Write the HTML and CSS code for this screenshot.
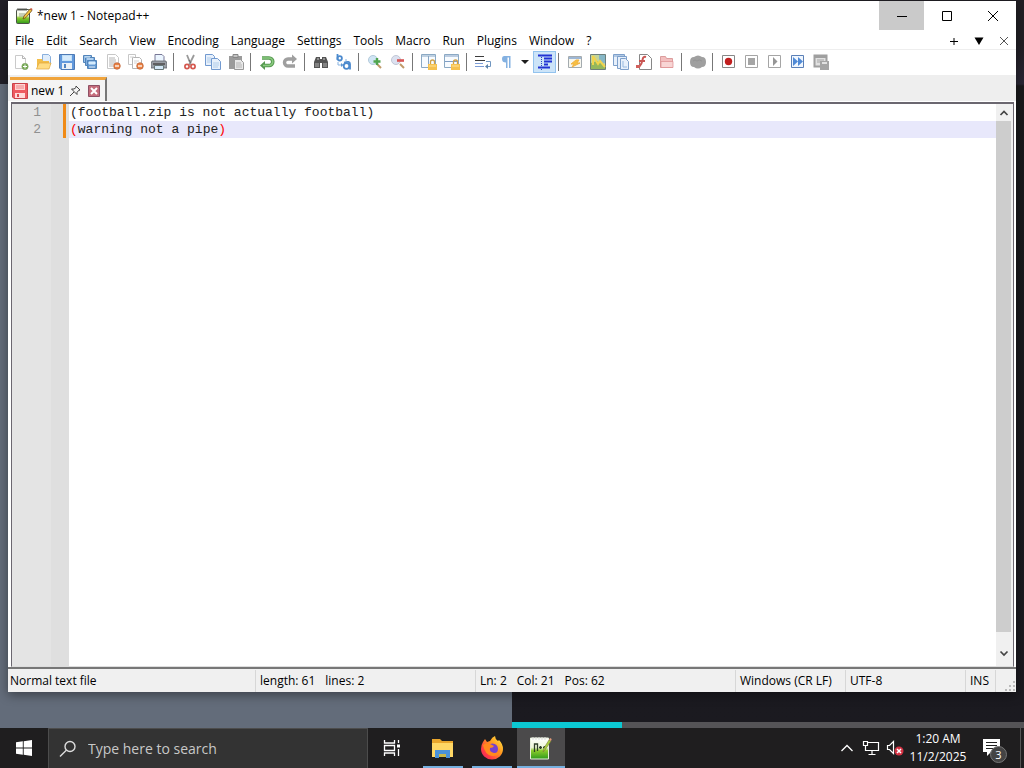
FILE: index.html
```html
<!DOCTYPE html>
<html lang="en">
<head>
<meta charset="utf-8">
<meta name="viewport" content="width=device-width, initial-scale=1">
<title>*new 1 - Notepad++</title>
<link rel="stylesheet" href="styles.css">
</head>
<body>
<svg class="sprite" aria-hidden="true">
  <defs>
    <linearGradient id="lime" x1="0" y1="0" x2="0" y2="1"><stop offset="0" stop-color="#fff"/><stop offset=".45" stop-color="#eef8d8"/><stop offset=".6" stop-color="#8ccb2c"/><stop offset="1" stop-color="#2f9a1c"/></linearGradient>
    <linearGradient id="fire" x1="1" y1="0" x2="0" y2="1"><stop offset="0" stop-color="#fff04a"/><stop offset=".4" stop-color="#ff9a1f"/><stop offset=".75" stop-color="#ff3b45"/><stop offset="1" stop-color="#e0206a"/></linearGradient>
    <symbol id="minus-dot" viewBox="0 0 8 8"><circle cx="4" cy="4" r="3.300" fill="#e8702a" stroke="#b04a18" stroke-width=".7"/><path d="M2 4h4" stroke="#fff" stroke-width="1.300"/></symbol>
  </defs>
</svg>

<main class="desktop">
  <div class="wallpaper" aria-hidden="true">
    <div class="pane-left"></div>
    <div class="pane-right"><div class="progress"><span></span></div></div>
  </div>

  <section class="window">
    <header class="titlebar">
      <svg class="app-icon" viewBox="0 0 18 18"><rect x="1.500" y="2.500" width="13" height="14" rx="1" fill="url(#lime)" stroke="#4b5345"/><path d="M3 1v3M5 1v3M7 1v3M9 1v3M11 1v3" stroke="#555" stroke-width=".9"/><path d="M4 7h6M4 9h5" stroke="#9aa38e"/><path d="M8 12l1-3 6-7 2 1.500-6 7z" fill="#f3c33e" stroke="#694b1f" stroke-width=".8"/><path d="M15 2l1-1 1.500 1-.6 1.400z" fill="#cc5540"/></svg>
      <h1>*new 1 - Notepad++</h1>
      <div class="caption-buttons">
        <button class="minimize" aria-label="Minimize"><svg viewBox="0 0 12 12"><path d="M1 6.500h10" stroke="#000"/></svg></button>
        <button aria-label="Maximize"><svg viewBox="0 0 12 12"><path d="M1.500 1.500h9v9h-9z" fill="none" stroke="#000"/></svg></button>
        <button aria-label="Close"><svg viewBox="0 0 12 12"><path d="M1 1l10 10M11 1L1 11" stroke="#000"/></svg></button>
      </div>
    </header>

    <nav class="menubar">
      <button>File</button><button>Edit</button><button>Search</button><button>View</button><button>Encoding</button><button>Language</button><button>Settings</button><button>Tools</button><button>Macro</button><button>Run</button><button>Plugins</button><button>Window</button><button>?</button>
      <div class="doc-buttons">
        <button aria-label="New document"><svg viewBox="0 0 12 12"><path d="M2 6.500h8M6 3v7" stroke="#000"/></svg></button>
        <button aria-label="Document list"><svg viewBox="0 0 12 12"><path d="M1.500 2.500h9L6 10z"/></svg></button>
        <button aria-label="Close document"><svg viewBox="0 0 12 12"><path d="M2 2l8 8M10 2l-8 8" stroke="#555"/></svg></button>
      </div>
    </nav>

    <div class="toolbar" role="toolbar" aria-label="Main toolbar">
      <button aria-label="New"><svg viewBox="0 0 16 16"><path d="M2.500 1.500h7l3 3v10h-10z" fill="#fff" stroke="#c3c3c3"/><path d="M9.500 1.500v3h3" fill="none" stroke="#aaa"/><circle cx="12" cy="12.500" r="3.200" fill="#5d9c35" stroke="#7f9d68" stroke-width=".6"/><path d="M12 10.500v4M10 12.500h4" stroke="#fff"/></svg></button>
      <button aria-label="Open"><svg viewBox="0 0 16 16"><path d="M6.500.500h6l2 2v8h-8z" fill="#dcebfb" stroke="#79a5d8"/><path d="M1 5h5l1 2h6v8H1z" fill="#f2b632"/><path d="M3 9h12l-2 6H.5z" fill="#ffd873" stroke="#dc9c22" stroke-width=".7"/></svg></button>
      <button aria-label="Save"><svg viewBox="0 0 16 16"><path d="M.5.5h15v15H2l-1.500-1.500z" fill="#4d8bd8" stroke="#3668ab"/><path d="M3 1h10v6H3z" fill="#b9dcf8"/><path d="M4 3h8M4 5h8" stroke="#eaf6ff"/><path d="M3 9h10v6H3z" fill="#e8eef4"/><path d="M5 10h2v4H5z" fill="#3872b8"/></svg></button>
      <button aria-label="Save All"><svg viewBox="0 0 16 16"><g stroke="#3b74b1"><path d="M1.500 1.500h8v7h-8z" fill="#8db9e5"/><path d="M3.500 3.500h9v8h-9z" fill="#70a5dc"/><path d="M5.500 6.500h9v8h-9z" fill="#4d8bcd"/></g><path d="M3 3h5M5 5h6M7 8h6v2H7z" stroke="#d9efff" fill="#c7e4fa"/><path d="M7 13h6" stroke="#e9f1f7"/></svg></button>
      <button aria-label="Close"><svg viewBox="0 0 16 16"><path d="M2.500.5h8l3 3v11h-11z" fill="#fff" stroke="#c0c0c0"/><path d="M4 4h6M4 6h7M4 8h7M4 10h5M4 12h4" stroke="#aaa"/><use href="#minus-dot" x="8" y="8" width="8" height="8"/></svg></button>
      <button aria-label="Close All"><svg viewBox="0 0 16 16"><path d="M.5.5h7v10h-7z" fill="#fff" stroke="#c0c0c0"/><path d="M4.500 3.500h7l2 2v9h-9z" fill="#fff" stroke="#aaa"/><path d="M2 3h4M6 7h5M6 9h3" stroke="#ccc"/><use href="#minus-dot" x="8" y="8" width="8" height="8"/></svg></button>
      <button aria-label="Print"><svg viewBox="0 0 16 16"><path d="M4 .5h7l2 2V8H4z" fill="#e9f4ff" stroke="#668"/><path d="M1 7h14l1 3v4H0v-4z" fill="#8b9199" stroke="#4b5058" stroke-width=".8"/><path d="M2 10h12" stroke="#333" stroke-width="1.500"/><path d="M3.500 11.500h9v4h-9z" fill="#cee4f6" stroke="#566"/></svg></button>
      <i class="sep"></i>
      <button aria-label="Cut"><svg viewBox="0 0 16 16"><path d="M5 1l4 10M12 1L7 11" stroke="#8d8d8d" stroke-width="1.800"/><path d="M9 9l-2-3" stroke="#555"/><g fill="none" stroke="#cf4237" stroke-width="1.700"><circle cx="5" cy="12.500" r="2.100"/><circle cx="11" cy="12.500" r="2.100"/></g></svg></button>
      <button aria-label="Copy"><svg viewBox="0 0 16 16"><g fill="#e4effb" stroke="#5f8dca"><path d="M.5.500h7l2 2v9h-9z"/><path d="M6.500 4.500h6l3 3v8h-9z"/></g><path d="M2 4h4M2 6h4M2 8h4M8 9h6M8 11h6M8 13h5" stroke="#a6c6e8"/></svg></button>
      <button aria-label="Paste"><svg viewBox="0 0 16 16"><path d="M1 2h13v13H1z" fill="#8e8e8e"/><path d="M5 .5h5v3H5z" fill="#bbb" stroke="#777"/><path d="M6.500 5.500h6l3 3v7h-9z" fill="#e5e5e5" stroke="#8b8b8b"/><path d="M8 9h5M8 11h6M8 13h6" stroke="#aaa"/></svg></button>
      <i class="sep"></i>
      <button aria-label="Undo"><svg viewBox="0 0 16 16"><path d="M3 4h7a3.500 3.500 0 010 7.500H5" fill="none" stroke="#3f8c38" stroke-width="3.600"/><path d="M6 7v9L1 11.500z" fill="#3f8c38"/><path d="M3 4h7a3.500 3.500 0 010 7.500H4" fill="none" stroke="#7bc36f" stroke-width="1.600"/></svg></button>
      <button aria-label="Redo"><svg viewBox="0 0 16 16"><path d="M11 5H6a3.500 3.500 0 000 7h7" fill="none" stroke="#929292" stroke-width="3.400"/><path d="M10 .5v9L15 5z" fill="#929292"/></svg></button>
      <i class="sep"></i>
      <button aria-label="Find"><svg viewBox="0 0 16 16"><path d="M3 3h4v2h2V3h4l2 5v6H9V9H7v5H1V8z" fill="#3d3d3d"/><path d="M3 9v4M5 9v4M11 9v4M13 9v4" stroke="#aaa"/><path d="M4 5h2M10 5h2" stroke="#ccc"/></svg></button>
      <button aria-label="Replace"><svg viewBox="0 0 16 16"><g fill="none" stroke="#347bc8" stroke-width="1.800"><path d="M1.500 0v6"/><circle cx="3.700" cy="4.300" r="2.200"/><circle cx="10.500" cy="12" r="2.800"/><path d="M8 8.500q6-2 6 1.500v5.500"/></g><path d="M2 8v3h4M10 5v2" fill="none" stroke="#79a9dc"/><path d="M5 9l2.500 2L5 13z" fill="#4688ce"/></svg></button>
      <i class="sep"></i>
      <button aria-label="Zoom In"><svg viewBox="0 0 16 16"><circle cx="6" cy="6" r="4.500" fill="#cbe2f4" stroke="#a8c3d5"/><path d="M10 10l4 4" stroke="#b88c55" stroke-width="2"/><path d="M10 4v7M6.500 7.500h7" stroke="#399837" stroke-width="2.400"/></svg></button>
      <button aria-label="Zoom Out"><svg viewBox="0 0 16 16"><circle cx="6" cy="6" r="4.500" fill="#d8deef" stroke="#b9bfd0"/><path d="M10 10l4 4" stroke="#b88c55" stroke-width="2"/><path d="M7 6.500h7" stroke="#d33e3e" stroke-width="2.600"/></svg></button>
      <i class="sep"></i>
      <button aria-label="Synchronize Vertical Scrolling"><svg viewBox="0 0 16 16"><path d="M.5.500h14v13H.5z" fill="#f6fbff" stroke="#7c9ebd"/><path d="M1 2h13M7.500 2v11" stroke="#7799bd"/><path d="M9.500 10V8a2 2 0 014 0v2" fill="none" stroke="#c9942d" stroke-width="1.300"/><path d="M7 10h9v6H7z" fill="#f5b936"/><path d="M8 12h7" stroke="#ffe08a"/></svg></button>
      <button aria-label="Synchronize Horizontal Scrolling"><svg viewBox="0 0 16 16"><path d="M.5.500h14v13H.5z" fill="#f6fbff" stroke="#7c9ebd"/><path d="M1 2h13M1 7.500h13" stroke="#6e91bd"/><path d="M9.500 10V8a2 2 0 014 0v2" fill="none" stroke="#c9942d" stroke-width="1.300"/><path d="M7 10h9v6H7z" fill="#f5b936"/><path d="M8 12h7" stroke="#ffe08a"/></svg></button>
      <i class="sep"></i>
      <button aria-label="Word Wrap"><svg viewBox="0 0 16 16"><path d="M0 2.500h9M0 6.500h10" stroke="#222"/><path d="M0 9.500h8M0 12.500h9" stroke="#6b8fd0"/><path d="M11 7.500h4.500v5H12" fill="none" stroke="#5d88b8"/><path d="M13 10v5l-3-2.500z" fill="#47749f"/></svg></button>
      <button aria-label="Show All Characters"><svg viewBox="0 0 16 16"><path d="M5 2h7.500v12H11V3.500H9.500V14H8V8.500Q4 8.500 4 5t3-3z" fill="#74a7de"/></svg></button>
      <button class="drop" aria-label="Show symbol options"><svg viewBox="0 0 16 16"><path d="M4 6h8l-4 4z"/></svg></button>
      <button class="pressed" aria-pressed="true" aria-label="Show Indent Guide"><svg viewBox="0 0 16 16"><path d="M1 1.500h14M7 4.500h8M7 7.500h8M7 10.500h4M1 13.500h12" stroke="#0a1ad0" stroke-width="2"/><path d="M4.500 1v15" stroke="#1a2cc0" stroke-dasharray="1 1"/></svg></button>
      <i class="sep tight"></i>
      <button aria-label="Define Language"><svg viewBox="0 0 16 16"><path d="M1.500 2.500h13v11h-13z" fill="#f6f6ee" stroke="#98a0a4"/><path d="M2 4h12" stroke="#91aed0" stroke-width="2"/><path d="M9 6L4 10h3l-2 3 8-4h-3l2-3z" fill="#f6b725" stroke="#f0a92a"/></svg></button>
      <button aria-label="Document Map"><svg viewBox="0 0 16 16"><path d="M.5.500h15v15H.5z" fill="#bfd08a" stroke="#596e69"/><path d="M9 1h6v8l-6 2z" fill="#77aebf"/><path d="M1 9l6-2 8 5v3H1z" fill="#87ae45"/><path d="M3 2v9M3 2l5 8 2-3 5 6" fill="none" stroke="#f0cf35" stroke-width="2"/></svg></button>
      <button aria-label="Document List"><svg viewBox="0 0 16 16"><g fill="#e4effb" stroke="#6d94c4"><path d="M.5.500h11v11H.5z"/><path d="M4.500 2.500h9v12h-9z"/><path d="M7.500 4.500h5l3 3v8h-8z"/></g><path d="M1 2h10" stroke="#6d94c4"/><path d="M10 7v6h4" fill="none" stroke="#89b0dc"/></svg></button>
      <button aria-label="Function List"><svg viewBox="0 0 16 16"><path d="M3.500.500h8l4 4v11h-12z" fill="#fff" stroke="#777"/><path d="M10 3Q7 2 6.500 6T3 13M3 7h6" fill="none" stroke="#c23e3b" stroke-width="2"/><path d="M0 11h4v3H0z" fill="#cc4b46"/></svg></button>
      <button aria-label="Folder as Workspace"><svg viewBox="0 0 16 16"><path d="M1.500 2.500h5l1 2h6v9h-12z" fill="#f2b7b7" stroke="#d79090"/><path d="M2 7.500h12v6H2z" fill="#f8d0cf" stroke="#d87d7e" stroke-width=".7"/></svg></button>
      <i class="sep"></i>
      <button aria-label="Monitoring"><svg viewBox="0 0 16 16"><path d="M0 8q0-5 4-5 4-3 8 0 4 0 4 5t-4 5q-4 3-8 0-4 0-4-5z" fill="#929292"/><path d="M3 7q2-2 4 0 2-2 5 0" fill="none" stroke="#858585"/></svg></button>
      <i class="sep"></i>
      <button aria-label="Start Recording"><svg viewBox="0 0 16 16"><path d="M1.500 1.500h12v12h-12z" fill="#fff" stroke="#777"/><circle cx="7.500" cy="7.500" r="3.700" fill="#b90000"/></svg></button>
      <button aria-label="Stop Recording"><svg viewBox="0 0 16 16"><path d="M1.500 1.500h12v12h-12z" fill="#fff" stroke="#999"/><path d="M4 4h7v7H4z" fill="#999"/></svg></button>
      <button aria-label="Playback"><svg viewBox="0 0 16 16"><path d="M1.500 1.500h12v12h-12z" fill="#fff" stroke="#999"/><path d="M6 3l4.500 4.500L6 12z" fill="#888"/></svg></button>
      <button aria-label="Run Macro Multiple Times"><svg viewBox="0 0 16 16"><path d="M1.500 1.500h12v12h-12z" fill="#eef6ff" stroke="#456fae"/><path d="M3 3l5 4.500L3 12zM8 3l5 4.500L8 12z" fill="#397bd1"/></svg></button>
      <button aria-label="Save Recorded Macro"><svg viewBox="0 0 16 16"><path d="M1.500 1.500h12v11h-12z" fill="#ddd" stroke="#929292" stroke-width="2"/><path d="M2 3h11" stroke="#929292" stroke-width="2"/><path d="M4 6h7M4 8h5" stroke="#999"/><path d="M7 7h9v9H7z" fill="#999"/><path d="M9 8h5v2H9z" fill="#ddd"/></svg></button>
    </div>

    <div class="tabbar">
      <div class="tab">
        <svg viewBox="0 0 16 16"><path d="M.5.500h15v15H2L.5 14z" fill="#ee5a60" stroke="#c8434b"/><path d="M3 1h10v6H3z" fill="#ffd4d4"/><path d="M4 3h8M4 5h8" stroke="#ec8488"/><path d="M3 10h10v5H3z" fill="#ffdada"/><path d="M5 11h2v3H5z" fill="#d94c51"/></svg>
        <span>new 1</span>
        <button aria-label="Pin tab"><svg viewBox="0 0 12 12"><path d="M7 1l4 4-1.500.5-1.500 2V9.500L2.500 4H5l2-1.500zM5 7l-4 4" fill="none" stroke="#444"/></svg></button>
        <button aria-label="Close tab"><svg viewBox="0 0 12 12"><path d="M.5.500h11v11H.5z" fill="#c56c7b" stroke="#8e5065"/><path d="M3 3l6 6M9 3l-6 6" stroke="#fff" stroke-width="2"/></svg></button>
      </div>
    </div>

    <div class="editor">
      <div class="margin">
        <div class="numbers"><span>1</span><span>2</span></div>
        <div class="changes"><i></i></div>
      </div>
      <div class="code" contenteditable="true" spellcheck="false" role="textbox" aria-multiline="true" aria-label="Document"><div>(football.zip is not actually football)</div><div class="current"><b>(</b>warning not a pipe<b>)</b></div></div>
      <div class="scrollbar">
        <button aria-label="Scroll up"><svg viewBox="0 0 12 12"><path d="M2.500 8L6 4.500 9.500 8" fill="none" stroke="#444" stroke-width="1.700"/></svg></button>
        <div class="thumb"></div>
        <button aria-label="Scroll down"><svg viewBox="0 0 12 12"><path d="M2.500 4.500L6 8l3.500-3.500" fill="none" stroke="#444" stroke-width="1.700"/></svg></button>
      </div>
    </div>

    <footer class="statusbar">
      <div class="doc-type">Normal text file</div>
      <div class="doc-size"><span>length: 61</span><span>lines: 2</span></div>
      <div class="cursor-pos"><span>Ln: 2</span><span>Col: 21</span><span>Pos: 62</span></div>
      <div class="eol">Windows (CR LF)</div>
      <div class="encoding">UTF-8</div>
      <div class="mode">INS</div>
      <svg class="grip" viewBox="0 0 12 12"><path d="M9 1h2v2H9zM5 5h2v2H5zM9 5h2v2H9zM1 9h2v2H1zM5 9h2v2H5zM9 9h2v2H9z" fill="#bbb"/></svg>
    </footer>
  </section>
</main>

<footer class="taskbar">
  <button class="start" aria-label="Start"><svg viewBox="0 0 16 16"><path d="M0 2.300l6.800-1v6.200H0zM7.700 1.200L16 0v7.500H7.700zM0 8.400h6.800v6.300L0 13.700zM7.700 8.400H16V16l-8.300-1.200z" fill="#fff"/></svg></button>
  <label class="search">
    <svg viewBox="0 0 18 18"><circle cx="11" cy="6.500" r="5" fill="none" stroke="#ddd" stroke-width="1.400"/><path d="M7.300 10.200L1 16.500" stroke="#ddd" stroke-width="1.400"/></svg>
    <input type="text" placeholder="Type here to search" aria-label="Type here to search">
  </label>
  <button class="task-view" aria-label="Task View"><svg viewBox="0 0 18 18"><path d="M1.500 1v3h10V1M1.500 17v-3h10v3M1.500 6.500h10v5h-10zM15.500 1v3M15.500 10v7" fill="none" stroke="#fff" stroke-width="1.300"/><path d="M14 5.500h3v3h-3z" fill="#fff"/></svg></button>
  <div class="apps">
    <button class="running" aria-label="File Explorer"><svg viewBox="0 0 24 24"><path d="M1 3h8l2 2h11v16H1z" fill="#e9a62c"/><path d="M1 7h21v14H1z" fill="#ffd765"/><path d="M4 22v-8h15v8h-4v-4H8v4z" fill="#4a92da"/><path d="M8 18h7v3H8z" fill="#c8b84c"/></svg></button>
    <button class="running" aria-label="Firefox"><svg viewBox="0 0 24 24"><path d="M3 6l2-3 2 3 3-1q2-4 5-5 0 3 3 5l1-1q4 4 4 9a11 10.500 0 01-22 0q0-4 2-7z" fill="url(#fire)"/><circle cx="12.500" cy="13" r="5.500" fill="#7541cf"/><path d="M3 9q4-3 7-1l4 2q-1 2-4 2-1 4 4 5 5 0 6-5 0 9-8 8-7-1-9-11z" fill="#ff8a1e"/></svg></button>
    <button class="running active" aria-label="Notepad++"><svg viewBox="0 0 24 24"><path d="M1.500 2h18v21h-18z" fill="url(#lime)" stroke="#e8f0dc"/><path d="M4 1v3M7 1v3M10 1v3M13 1v3M16 1v3" stroke="#ddd"/><path d="M5.500 16V8h3v7M10 11.500h3M11.500 10v3M14 11.500h3M15.500 10v3" fill="none" stroke="#30402a" stroke-width="1.300"/><path d="M14 16l1-4 5-8 2 1-6 9z" fill="#a9d43d" stroke="#7c7a36" stroke-width=".6"/><path d="M20 4l2 1 .7-2-1.700-1z" fill="#e39a78"/></svg></button>
  </div>
  <div class="tray">
    <button aria-label="Show hidden icons"><svg viewBox="0 0 14 14"><path d="M1.500 10L7 4.500l5.500 5.500" fill="none" stroke="#fff" stroke-width="1.300"/></svg></button>
    <button aria-label="Network"><svg class="net" viewBox="0 0 18 16"><path d="M5.500 2.500h11v8h-13V8M10 11v3M6.500 14.500h7M1.500 1.500h4v4h-4zM3.500 6v3" fill="none" stroke="#fff" stroke-width="1.200"/></svg></button>
    <button aria-label="Volume, unavailable"><svg class="net" viewBox="0 0 18 16"><path d="M1.500 5.500h2l4-4v12l-4-4h-2z" fill="none" stroke="#fff" stroke-width="1.200"/><circle cx="13" cy="11" r="4.500" fill="#d43243"/><path d="M11 9l4 4M15 9l-4 4" stroke="#fff" stroke-width="1.500"/></svg></button>
    <button class="clock"><span>1:20 AM</span><span>11/2/2025</span></button>
    <button class="notifications" aria-label="Notifications"><svg viewBox="0 0 24 24"><path d="M0 3h17v13H8l-4 4v-4H0z" fill="#fff"/><path d="M3 6.500h11M3 9.500h11M3 12.500h8" stroke="#222"/></svg><span class="badge">3</span></button>
    <i class="show-desktop"></i>
  </div>
</footer>
</body>
</html>
```

FILE: styles.css
```css
* { box-sizing: border-box; }

body {
  margin: 0;
  height: 100vh;
  display: grid;
  grid-template-rows: minmax(0, 1fr) 40px;
  font: 12px/16px "Open Sans", "Noto Sans", sans-serif;
  color: #000;
  background: #1c1b20;
}

button {
  display: flex;
  align-items: center;
  justify-content: center;
  margin: 0;
  padding: 0;
  border: 0;
  background: none;
  font: inherit;
  color: inherit;
}

svg { display: block; flex: none; }
.sprite { position: absolute; width: 0; height: 0; }

/* Desktop behind the window */
.desktop { display: grid; grid-template: minmax(0, 1fr) / minmax(0, 1fr); }
.desktop > * { grid-area: 1 / 1; }
.wallpaper { display: grid; grid-template-columns: 1fr 1fr; }
.pane-left { background: linear-gradient(#211f27 84px, #636c7a 84px); }
.pane-right { display: flex; flex-direction: column; justify-content: flex-end; background: linear-gradient(#211f24 45px, #292634 84px, #19191b 86px, #1b1a20); }
.progress { height: 6px; background: #555457; }
.progress span { display: block; width: 110px; height: 6px; background: #0cc9d3; }

.window {
  display: flex;
  flex-direction: column;
  margin: 1px 8px 36px;
  background: #fff;
  box-shadow: 0 3px 10px #0006;
}

/* Title bar */
.titlebar { display: flex; align-items: center; height: 30px; padding-left: 7px; gap: 4px; }
.app-icon { width: 18px; height: 18px; }
.titlebar h1 { margin: 0; flex: 1; font-size: 12px; font-weight: 400; }
.caption-buttons { display: flex; align-self: flex-start; }
.caption-buttons button { width: 46px; height: 29px; }
.caption-buttons .minimize { width: 45px; background: #cacaca; }
.caption-buttons svg { width: 12px; height: 12px; }

/* Menu */
.menubar { display: flex; align-items: flex-end; height: 19px; padding-left: 7px; gap: 12px; border-bottom: 1px solid #eee; }
.doc-buttons { display: flex; gap: 1px; margin-left: auto; }
.doc-buttons button { width: 24px; height: 16px; }
.doc-buttons svg { width: 12px; height: 12px; }

/* Toolbar */
.toolbar { display: flex; align-items: center; height: 24px; margin-bottom: 1px; padding-left: 1px; }
.toolbar button { width: 23px; height: 22px; }
.toolbar svg { width: 16px; height: 16px; opacity: .88; }
.toolbar .drop { width: 16px; }
.toolbar .pressed { background: #cce4f8; border: 1px solid #93c3ee; }
.sep { width: 8px; height: 18px; background: linear-gradient(#777, #777) 3px 0 / 1px 100% no-repeat; }
.sep.tight { width: 7px; background-position-x: 2px; }

/* Tabs */
.tabbar { display: flex; align-items: flex-end; height: 27px; padding-left: 2px; background: #eee; border-bottom: 1px solid #fff; }
.tab { display: flex; align-items: center; height: 24px; padding: 0 3px 0 2px; gap: 3px; border-top: 3px solid #f0a43c; border-right: 2px solid #777; background: #f4f4f4; }
.tab svg { width: 16px; height: 16px; }
.tab button { width: 16px; height: 16px; }
.tab button svg { width: 12px; height: 12px; }

/* Editor */
.editor { flex: 1; min-height: 0; display: flex; margin: 0 2px 0 3px; border: 1px solid #6b6770; border-width: 2px 1px 1px; border-bottom-color: #ddd; font: 13px/17px "Liberation Mono", monospace; }
.margin { display: flex; width: 57px; background: #e4e4e4; }
.numbers { display: flex; flex-direction: column; width: 29px; text-align: right; color: #909090; }
.changes { flex: 1; margin-left: 10px; padding-left: 12px; background: #dfdfdf; }
.changes i { display: block; width: 3px; height: 34px; background: #f08a16; }
.code { flex: 1; min-width: 0; outline: 0; color: #222; }
.code div { padding-left: 1px; white-space: pre; }
.code .current { background: #e8e8fb; }
.code b { color: #f00; font-weight: 400; }
.scrollbar { display: flex; flex-direction: column; width: 17px; padding-right: 2px; background: #f0f0f0; }
.scrollbar button { height: 17px; }
.scrollbar svg { width: 12px; height: 12px; }
.scrollbar .thumb { flex: 1; margin-bottom: 15px; background: #cdcdcd; }
.scrollbar button:last-child { height: 19px; align-items: flex-start; }

/* Status bar */
.statusbar { display: flex; align-items: flex-end; height: 25px; background: #f0f0f0; border-top: 2px solid #777; }
.statusbar div { display: flex; gap: 10px; height: 22px; padding: 3px 4px; border-right: 1px solid #d7d7d7; white-space: nowrap; }
.statusbar .doc-type { width: 248px; padding-left: 2px; }
.doc-size { width: 220px; }
.cursor-pos { flex: 1; }
.eol { width: 110px; }
.encoding { width: 120px; }
.mode { width: 30px; }
.grip { width: 12px; height: 12px; margin-left: 8px; }

/* Taskbar */
.taskbar { display: flex; background: #1f1e1f; color: #fff; }
.start { width: 48px; }
.start svg { width: 16px; height: 16px; }
.search { display: flex; align-items: center; width: 320px; padding-left: 10px; gap: 11px; background: #333; border: 1px solid #4c4c4c; border-bottom: 0; }
.search svg { width: 18px; height: 18px; }
.search input { flex: 1; min-width: 0; padding: 0; border: 0; outline: 0; background: none; color: #fff; font: 14px/20px "Open Sans", "Noto Sans", sans-serif; }
.search input::placeholder { color: #c8c8c8; opacity: 1; }
.task-view { width: 48px; }
.task-view svg { width: 18px; height: 18px; }
.apps { display: flex; gap: 1px; margin-left: 3px; }
.apps button { width: 48px; background: linear-gradient(#76b0df, #76b0df) center bottom / 40px 2px no-repeat; }
.apps .active { background-color: #4b4a4b; background-size: 48px 2px; }
.apps svg { width: 24px; height: 24px; }
.tray { display: flex; margin-left: auto; }
.tray button { width: 24px; }
.tray svg { width: 14px; height: 14px; }
.tray svg.net { width: 18px; height: 16px; }
.tray .clock { flex-direction: column; width: 62px; line-height: 18px; }
.tray .notifications { position: relative; width: 51px; }
.tray .notifications svg { width: 24px; height: 24px; }
.badge { position: absolute; right: 13px; bottom: 5px; width: 17px; height: 17px; border-radius: 9px; background: #444; border: 1px solid #777; font-size: 11px; line-height: 15px; }
.show-desktop { width: 4px; border-left: 1px solid #555; }
```
